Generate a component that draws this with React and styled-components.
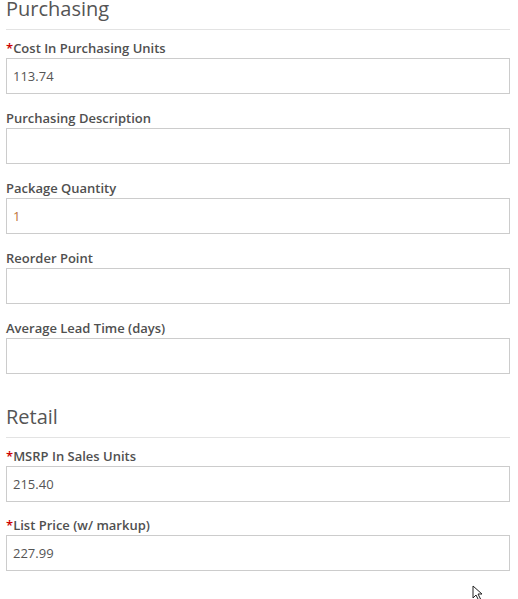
import React from "react";
import styled, { createGlobalStyle } from "styled-components";

const Global = createGlobalStyle`
  html, body { margin: 0; padding: 0; background: #ffffff; }
  body { font-family: "Open Sans", "Noto Sans", sans-serif; }
`;

const Page = styled.div`
  width: 504px;
  padding: 0 8px 0 6px;
  position: relative;
  height: 599px;
  overflow: hidden;
`;

const Section = styled.section`
  margin-top: ${(p) => p.$top || 0}px;
`;

const Heading = styled.h2`
  margin: 0 0 9px;
  padding: 0 0 ${(p) => p.$pb || 11}px;
  font-size: 20px;
  line-height: 18px;
  font-weight: 400;
  color: #555555;
  border-bottom: 1px solid #e3e3e3;
`;

const Field = styled.div`
  display: flex;
  flex-direction: column;
  margin-bottom: ${(p) => p.$mb ?? 16}px;
`;

const Label = styled.label`
  font-size: 13px;
  line-height: 18px;
  font-weight: 600;
  color: #505050;
  margin-bottom: 1px;
`;

const Req = styled.span`
  color: #cc0000;
`;

const Input = styled.input`
  box-sizing: border-box;
  width: 504px;
  height: 36px;
  margin: 0;
  padding: 0 6px;
  border: 1px solid #cccccc;
  border-radius: 0;
  background: #ffffff;
  font-family: "Open Sans", "Noto Sans", sans-serif;
  font-size: 13px;
  color: ${(p) => p.$color || "#555555"};
  outline: none;
`;

const Cursor = styled.svg`
  position: absolute;
  left: 472px;
  top: 585px;
`;

const purchasing = [
  { label: "Cost In Purchasing Units", req: true, value: "113.74" },
  { label: "Purchasing Description", value: "" },
  { label: "Package Quantity", value: "1", color: "#c0743a" },
  { label: "Reorder Point", value: "" },
  { label: "Average Lead Time (days)", value: "" },
];

const retail = [
  { label: "MSRP In Sales Units", req: true, value: "215.40" },
  { label: "List Price (w/ markup)", req: true, value: "227.99" },
];

function Fields({ items, spacing }) {
  return items.map((f, i) => (
    <Field key={f.label} $mb={spacing[i]}>
      <Label>
        {f.req && <Req>*</Req>}
        {f.label}
      </Label>
      <Input readOnly value={f.value} $color={f.color} />
    </Field>
  ));
}

export default function App() {
  return (
    <Page>
      <Global />
      <Section>
        <Heading>Purchasing</Heading>
        <Fields items={purchasing} spacing={[15, 15, 15, 15, 0]} />
      </Section>
      <Section $top={34}>
        <Heading $pb={11}>Retail</Heading>
        <Fields items={retail} spacing={[14, 0]} />
      </Section>
      <Cursor width="14" height="16" viewBox="0 0 14 16">
        <path
          d="M1 1 L1 13 L4 10 L6.5 15 L8.5 14 L6 9 L10 9 Z"
          fill="#ffffff"
          stroke="#222222"
          strokeWidth="1"
          strokeLinejoin="miter"
        />
      </Cursor>
    </Page>
  );
}
